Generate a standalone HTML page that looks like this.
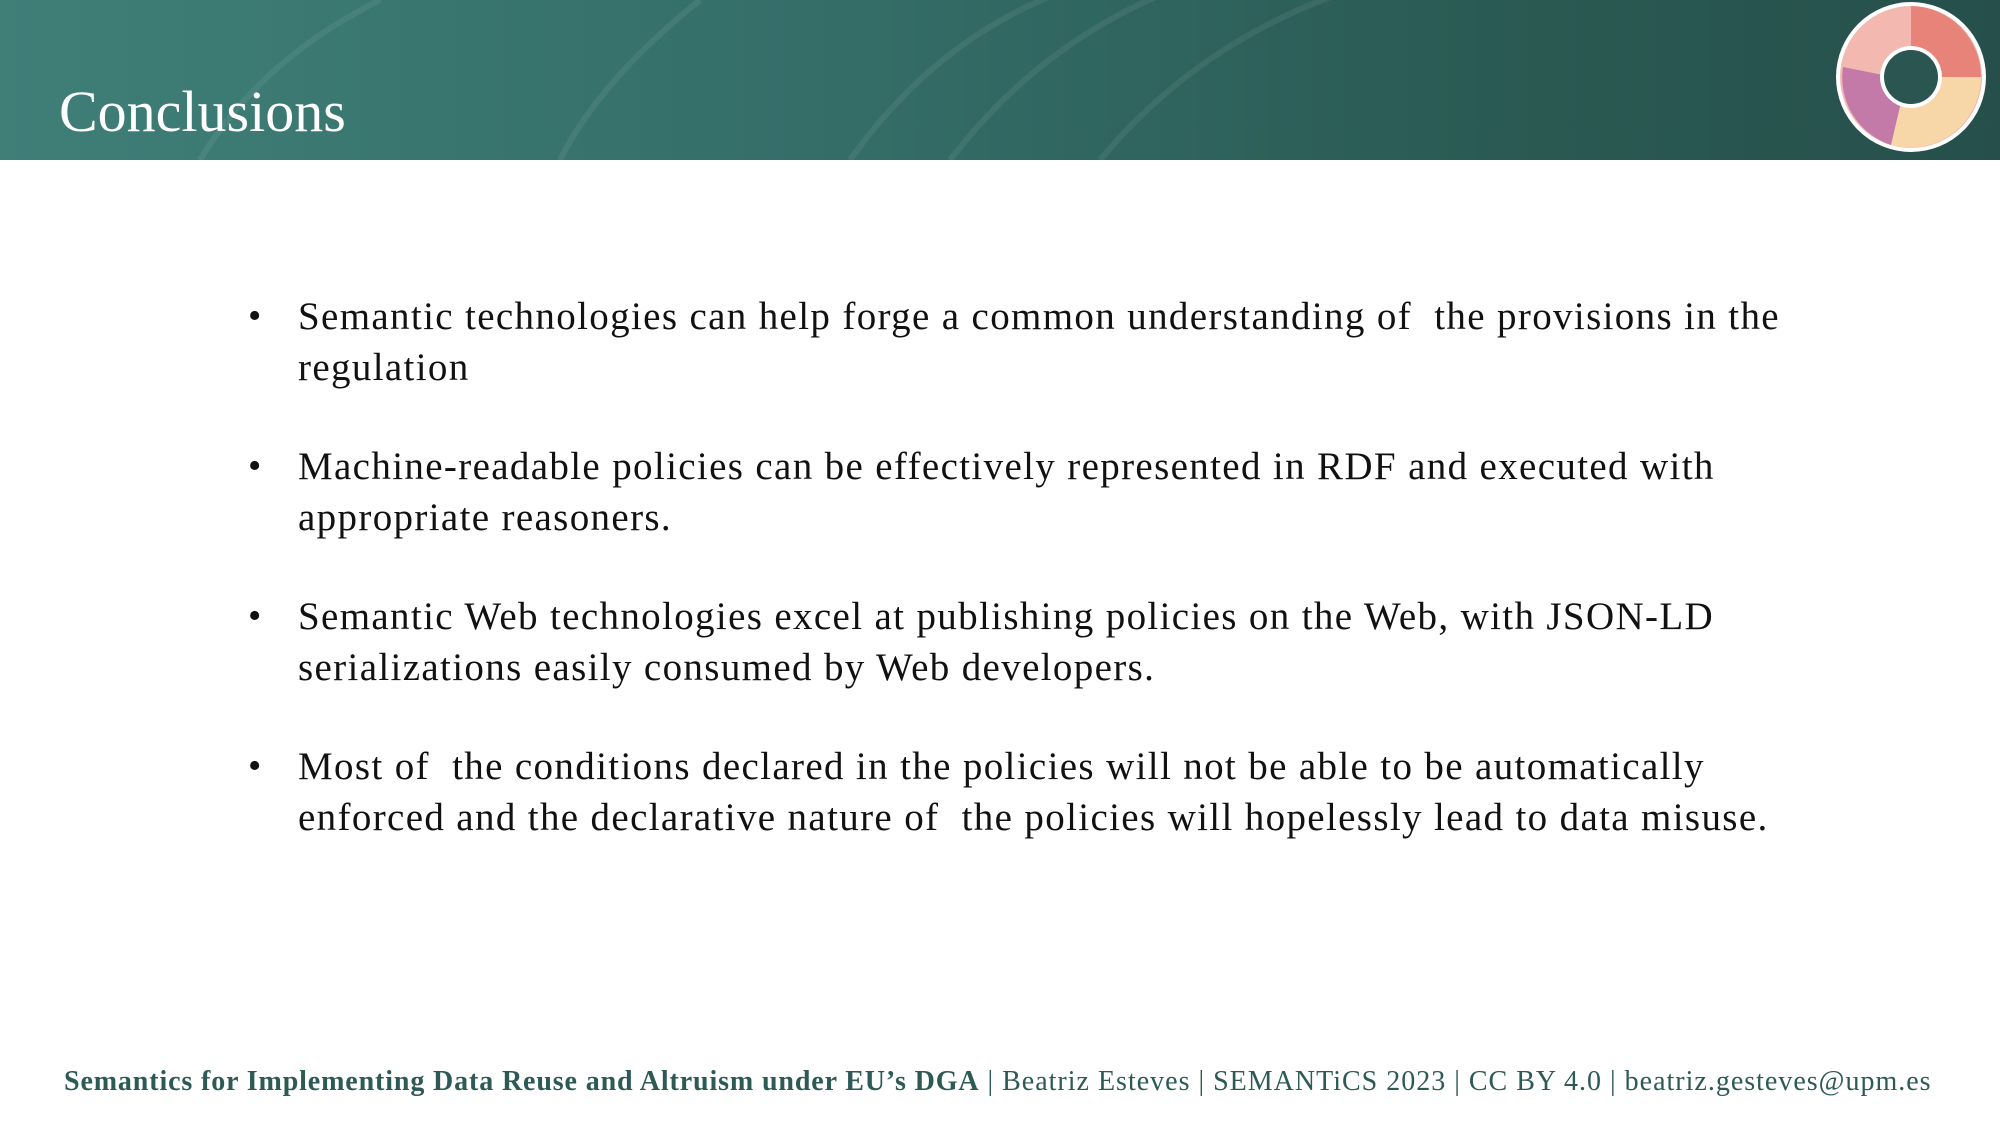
<!DOCTYPE html>
<html><head><meta charset="utf-8"><style>
html,body{margin:0;padding:0}
body{width:2000px;height:1125px;position:relative;background:#fff;overflow:hidden;font-family:"Liberation Serif",serif}
.hdr{position:absolute;left:0;top:0;width:2000px;height:160px;background:linear-gradient(90deg,#3f7f78 0%,#356e69 40%,#2a5a53 75%,#264f4b 100%)}
.title{position:absolute;left:59px;top:83px;font-size:58px;color:#fff;line-height:1}
.b{position:absolute;left:298px;font-size:39px;letter-spacing:1.35px;color:#111;line-height:51px;white-space:nowrap}
.b::before{content:"•";position:absolute;left:-50px;font-size:38px}
.ft{position:absolute;left:64px;top:1064px;font-size:28px;letter-spacing:1.0px;color:#2d5a55;white-space:nowrap;line-height:36px}
.ft b{font-weight:bold;letter-spacing:0.87px}
</style></head><body>
<div class="hdr">
<svg width="2000" height="160" style="position:absolute;left:0;top:0" fill="none">
<g stroke="rgba(255,255,255,0.07)" stroke-width="6">
<path d="M850 160 Q950 20 1100 -20"/><path d="M950 160 Q1050 30 1200 -20"/><path d="M1100 160 Q1200 40 1350 -10"/>
<path d="M200 160 Q260 60 380 0"/><path d="M560 160 Q600 80 700 0"/>
</g>
</svg>
<div class="title">Conclusions</div>
<svg width="160" height="160" style="position:absolute;left:1831px;top:-3px" viewBox="0 0 160 160">
<circle cx="80" cy="80" r="75" fill="#fff"/>
<circle cx="80" cy="80" r="71" fill="#f3b8b0"/>
<path d="M80 9 A71 71 0 0 1 150 80 L108 80 A28 28 0 0 0 80 52Z" fill="#e8837a"/>
<path d="M150 80 A71 71 0 0 1 60 148 L70 105 A28 28 0 0 0 108 80Z" fill="#f7d6a8"/>
<path d="M60 148 A71 71 0 0 1 12 70 L52 78 A28 28 0 0 0 70 105Z" fill="#c47aa8"/>
<circle cx="80" cy="80" r="31" fill="#fff"/>
<circle cx="80" cy="80" r="27" fill="#2a5550"/>
</svg>
</div>
<div class="b" style="top:291px">Semantic technologies can help forge a common understanding of&nbsp; the provisions in the<br>regulation</div>
<div class="b" style="top:441px">Machine-readable policies can be effectively represented in RDF and executed with<br>appropriate reasoners.</div>
<div class="b" style="top:591px">Semantic Web technologies excel at publishing policies on the Web, with JSON-LD<br>serializations easily consumed by Web developers.</div>
<div class="b" style="top:741px">Most of&nbsp; the conditions declared in the policies will not be able to be automatically<br>enforced and the declarative nature of&nbsp; the policies will hopelessly lead to data misuse.</div>
<div class="ft"><b>Semantics for Implementing Data Reuse and Altruism under EU’s DGA</b> | Beatriz Esteves | SEMANTiCS 2023 | CC BY 4.0 | beatriz.gesteves@upm.es</div>
</body></html>
